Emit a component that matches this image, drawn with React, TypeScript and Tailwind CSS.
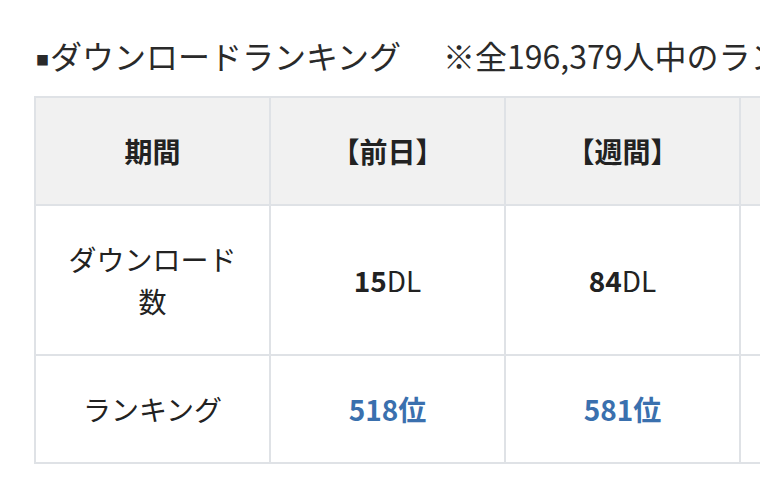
import React from "react";

const font = { fontFamily: '"Noto Sans CJK JP", "Noto Sans", sans-serif' };

export default function App() {
  const cell =
    "border-2 border-[#dfe2e6] px-[30px] py-[32px] text-center align-middle text-[28px] leading-[42px]";
  return (
    <div className="w-[760px] h-[486px] overflow-hidden bg-white text-[#222]" style={font}>
      <div className="pl-[34px] pt-[34px]">
        <h2 className="h-[42px] overflow-visible whitespace-nowrap text-[32px] leading-[42px] font-normal mb-[20px] pl-[2px] text-[#2a2a2a]">
          <span className="text-[13px] leading-none align-[4px] mr-[1px]">■</span>ダウンロードランキング
          <span className="ml-[42px]">※全196,379人中のランキング</span>
        </h2>
        <table className="border-collapse table-fixed w-[940px]">
          <colgroup>
            <col className="w-[235px]" />
            <col className="w-[235px]" />
            <col className="w-[235px]" />
            <col className="w-[235px]" />
          </colgroup>
          <thead>
            <tr className="bg-[#f1f1f1]">
              <th className={`${cell} font-bold`}>期間</th>
              <th className={`${cell} font-bold`}>【前日】</th>
              <th className={`${cell} font-bold`}>【週間】</th>
              <th className={`${cell} font-bold`}>【月間】</th>
            </tr>
          </thead>
          <tbody>
            <tr>
              <td className={cell}>ダウンロード数</td>
              <td className={cell}>
                <span className="font-bold">15</span>DL
              </td>
              <td className={cell}>
                <span className="font-bold">84</span>DL
              </td>
              <td className={cell}>
                <span className="font-bold">312</span>DL
              </td>
            </tr>
            <tr>
              <td className={cell}>ランキング</td>
              <td className={`${cell} font-bold text-[#3a70ae]`}>518位</td>
              <td className={`${cell} font-bold text-[#3a70ae]`}>581位</td>
              <td className={`${cell} font-bold text-[#3a70ae]`}>602位</td>
            </tr>
          </tbody>
        </table>
      </div>
    </div>
  );
}
